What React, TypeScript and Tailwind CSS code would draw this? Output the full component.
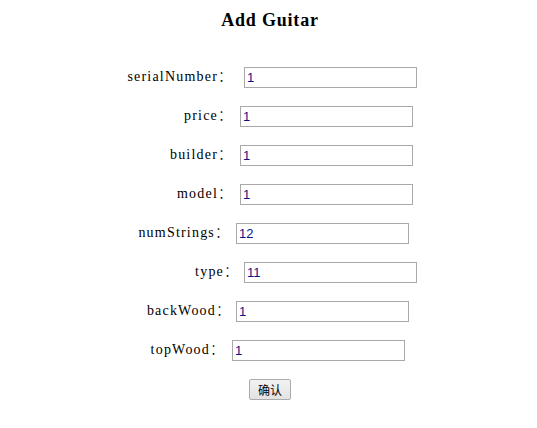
import { useState } from 'react';

type Field = {
  name: string;
  value: string;
  pad: string;
  gap: string;
};

const fields: Field[] = [
  { name: 'serialNumber', value: '1', pad: 'pl-[112px]', gap: 'ml-[12px]' },
  { name: 'price', value: '1', pad: 'pl-[112px]', gap: 'ml-[8px]' },
  { name: 'builder', value: '1', pad: 'pl-[112px]', gap: 'ml-[8px]' },
  { name: 'model', value: '1', pad: 'pl-[112px]', gap: 'ml-[8px]' },
  { name: 'numStrings', value: '12', pad: 'pl-[109px]', gap: 'ml-[7px]' },
  { name: 'type', value: '11', pad: 'pl-[118px]', gap: 'ml-[6px]' },
  { name: 'backWood', value: '1', pad: 'pl-[110px]', gap: 'ml-[6px]' },
  { name: 'topWood', value: '1', pad: 'pl-[104px]', gap: 'ml-[8px]' },
];

function FieldRow({ field, value, onChange }: { field: Field; value: string; onChange: (v: string) => void }) {
  return (
    <div className={`flex items-center h-[21px] ${field.pad}`}>
      <label
        htmlFor={field.name}
        className="w-[120px] shrink-0 pb-[3px] text-right text-[14px] tracking-[1.2px] font-normal text-black font-['Liberation_Serif','Noto_Sans_CJK_SC',serif]"
      >
        {field.name}
        <span className="tracking-normal font-light font-['Noto_Sans_CJK_SC',sans-serif]">：</span>
      </label>
      <input
        id={field.name}
        value={value}
        onChange={e => onChange(e.currentTarget.value)}
        className={`${field.gap} w-[173px] h-[21px] shrink-0 border border-[#a9a9a9] bg-white px-[2px] text-[13px] text-[#101088] outline-none font-['Liberation_Sans',Arial,sans-serif]`}
      />
    </div>
  );
}

export default function App() {
  const [values, setValues] = useState<Record<string, string>>(
    Object.fromEntries(fields.map(f => [f.name, f.value]))
  );

  return (
    <div className="w-[537px] h-[428px] bg-white">
      <h1 className="pt-[10px] pl-[3px] text-center text-[18px] leading-[20px] tracking-[0.8px] font-bold text-black font-['Liberation_Serif',serif]">
        Add Guitar
      </h1>
      <form
        className="mt-[37px] flex flex-col gap-[18px]"
        onSubmit={e => e.preventDefault()}
      >
        {fields.map(field => (
          <FieldRow
            key={field.name}
            field={field}
            value={values[field.name]}
            onChange={v => setValues({ ...values, [field.name]: v })}
          />
        ))}
        <div className="flex pl-[249px]">
          <button
            type="submit"
            className="w-[42px] h-[21px] rounded-[2px] border border-[#acacac] bg-gradient-to-b from-[#f2f2f2] to-[#e3e3e3] text-[12px] leading-[19px] text-black font-['Noto_Sans_CJK_SC',sans-serif]"
          >
            确认
          </button>
        </div>
      </form>
    </div>
  );
}
